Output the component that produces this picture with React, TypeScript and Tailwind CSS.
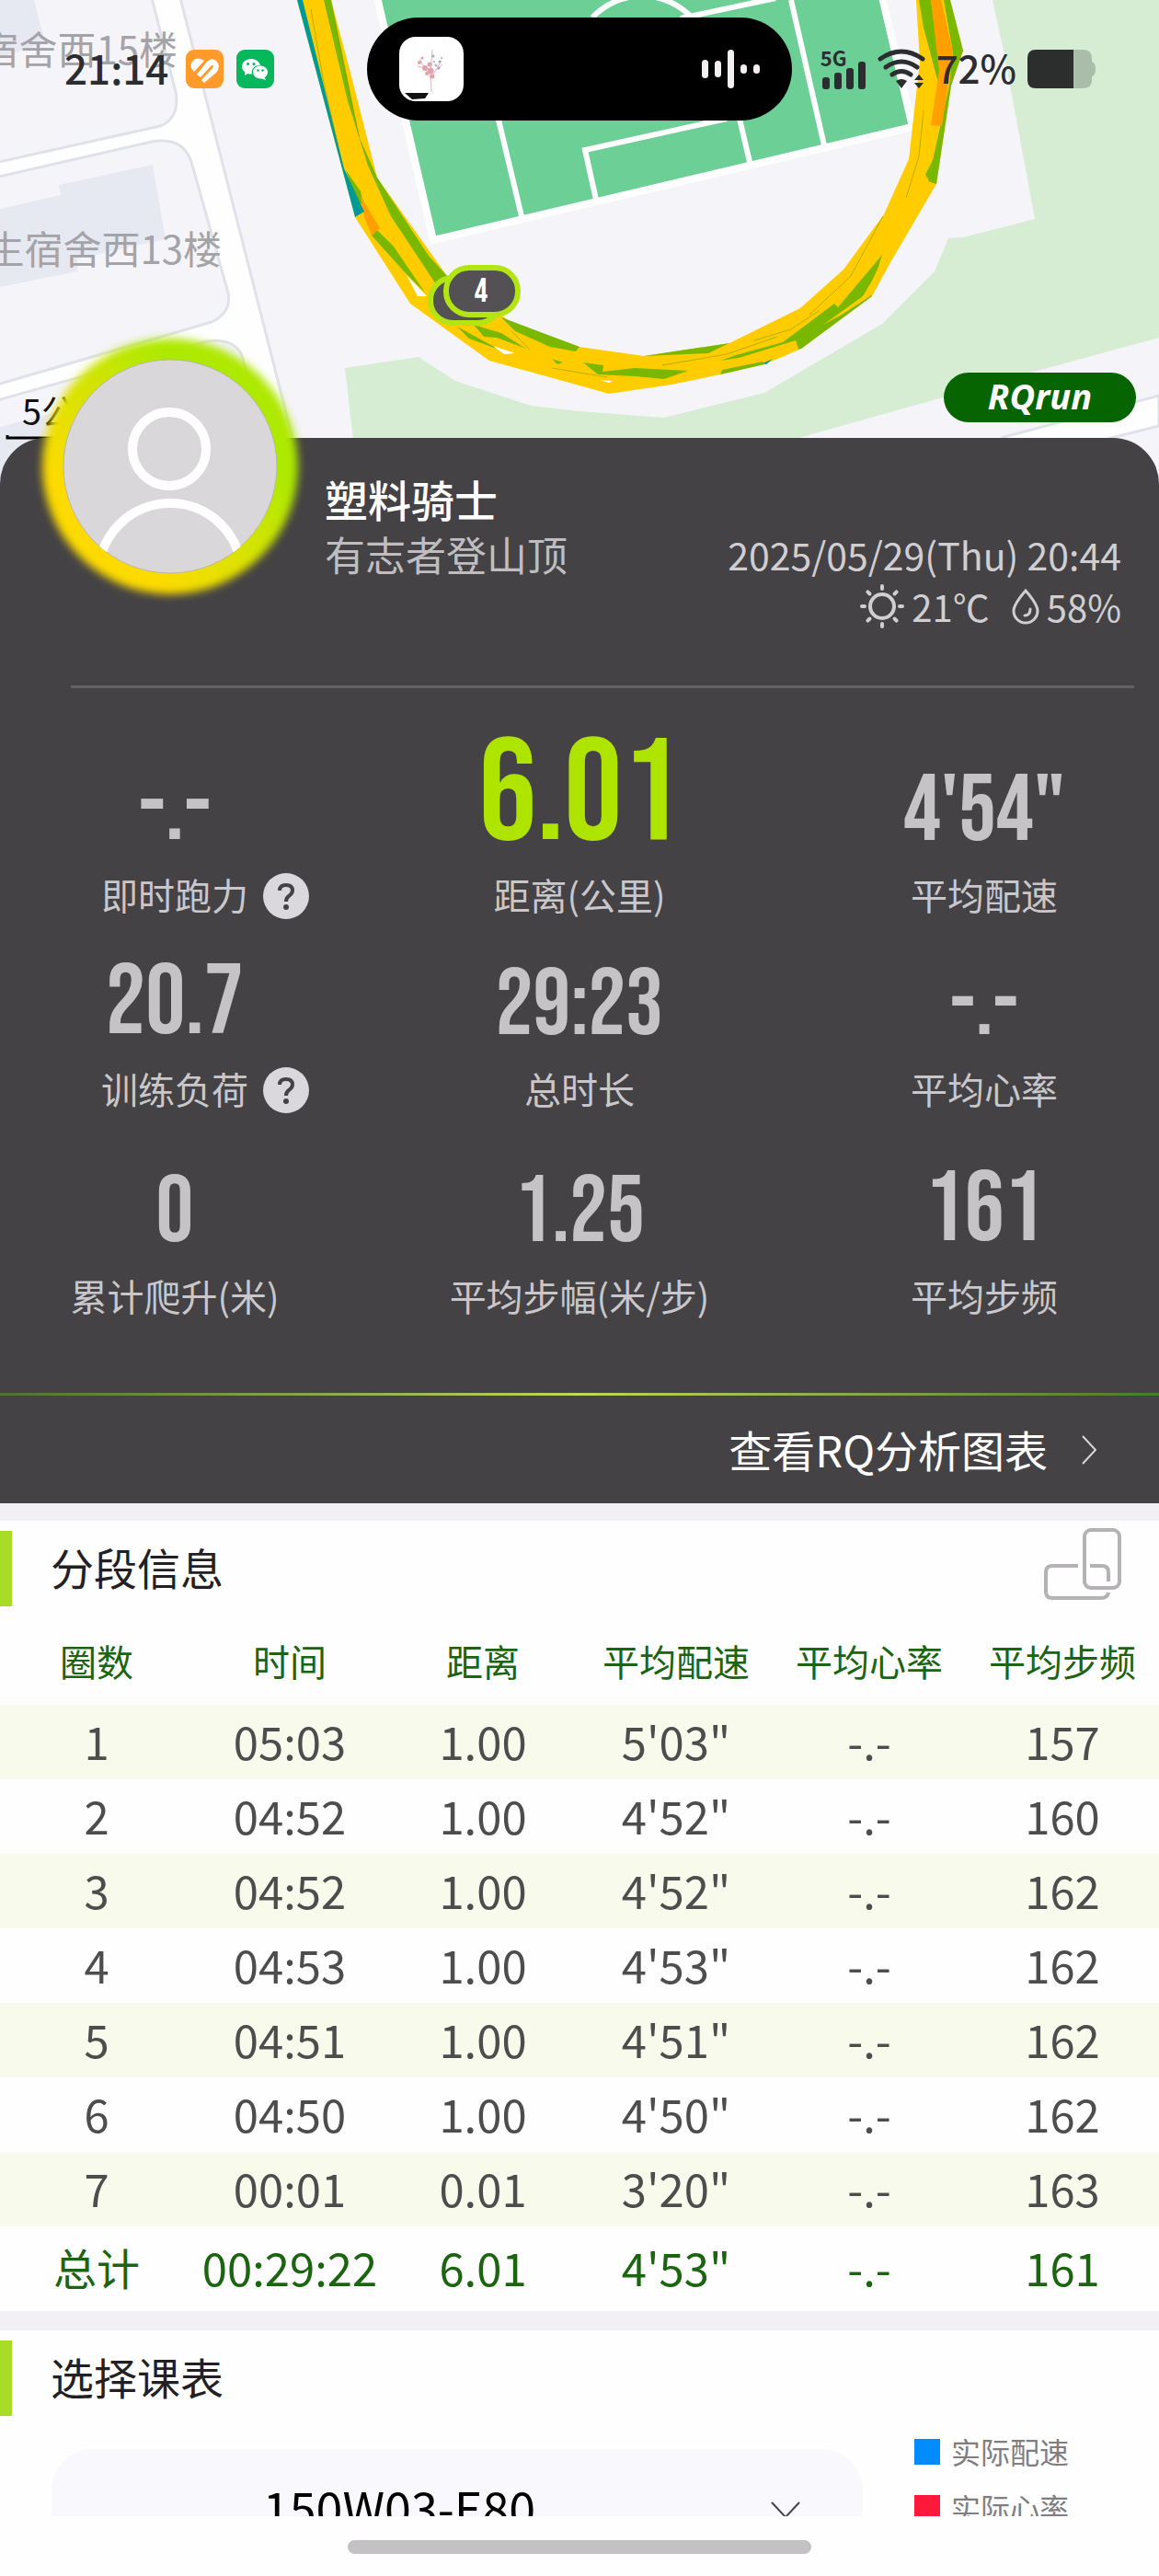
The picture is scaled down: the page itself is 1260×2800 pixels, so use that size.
import type { ReactNode } from "react";

interface Stat {
  label: string;
  value: string;
  size?: "hero" | "large";
  help?: boolean;
}

const STATS: Stat[] = [
  { label: "即时跑力", value: "-.-", size: "large", help: true },
  { label: "距离(公里)", value: "6.01", size: "hero" },
  { label: "平均配速", value: "4'54\"" },
  { label: "训练负荷", value: "20.7", size: "large", help: true },
  { label: "总时长", value: "29:23" },
  { label: "平均心率", value: "-.-" },
  { label: "累计爬升(米)", value: "0" },
  { label: "平均步幅(米/步)", value: "1.25" },
  { label: "平均步频", value: "161", size: "large" },
];

const VALUE_STYLES = {
  hero: "text-[158px] text-[#aee400]",
  large: "mb-[10px] text-[108px] text-[#c6c3c7]",
  base: "mb-[10px] text-[102px] text-[#c6c3c7]",
};

const LAP_HEAD = ["圈数", "时间", "距离", "平均配速", "平均心率", "平均步频"];

const LAPS = [
  ["1", "05:03", "1.00", "5'03\"", "-.-", "157"],
  ["2", "04:52", "1.00", "4'52\"", "-.-", "160"],
  ["3", "04:52", "1.00", "4'52\"", "-.-", "162"],
  ["4", "04:53", "1.00", "4'53\"", "-.-", "162"],
  ["5", "04:51", "1.00", "4'51\"", "-.-", "162"],
  ["6", "04:50", "1.00", "4'50\"", "-.-", "162"],
  ["7", "00:01", "0.01", "3'20\"", "-.-", "163"],
];

const LAP_TOTAL = ["00:29:22", "6.01", "4'53\"", "-.-", "161"];

function TrackMap() {
  return (
    <svg
      className="block h-[530px] w-full"
      viewBox="0 0 1260 530"
      preserveAspectRatio="xMidYMin slice"
      aria-label="跑步轨迹"
    >
      <rect width="1260" height="530" fill="#f5f4f9" />

      {/* Streets and dormitory blocks */}
      <path d="M-10 -10H194L318 476L332 540H-10Z" fill="#fefefe" stroke="#e0e2ea" strokeWidth="3" />
      <path d="M-10 -10H163L191 100Q196 128 174 137L-10 178Z" fill="#f5f4f9" stroke="#e0e2ea" strokeWidth="3" />
      <path d="M-10 194L165 154Q199 148 208 176L248 318Q252 340 230 350L-10 420Z" fill="#f5f4f9" stroke="#e0e2ea" strokeWidth="3" />
      <path d="M-10 437L225 371Q252 367 262 384L292 480V540H-10Z" fill="#f5f4f9" stroke="#e0e2ea" strokeWidth="3" />
      <path d="M0 0H37L49 47L0 62Z" fill="#e6e9f1" />
      <path d="M0 227L66 212L64 201L166 179L180 260L84 281V295L0 312Z" fill="#e6e9f1" />
      <path d="M0 464L60 448V530H0Z" fill="#e6e9f1" />

      {/* Lawns */}
      <path
        d="M375 400L455 388L495 414L577 441L630 447L722 454L831 427L959 352L1016 295L1031 259L1047 258L1125 238L1092 60L1079 0H1260V367L1128 403L868 476V530H390Z"
        fill="#d6edd4"
      />
      <path d="M1088 476L1260 430V463L1208 476L1160 490Z" fill="#fefefe" stroke="#e0e2ea" strokeWidth="3" />

      {/* Football pitch */}
      <path d="M408 -12L471 261L992 138L957 -12Z" fill="#6bcf96" stroke="#fefefe" strokeWidth="8" />
      <g fill="none" stroke="#fefefe" strokeWidth="6">
        <path d="M530 80L567 235M648 217L636 163L790 129M803 125L815 176M860 0L896 158M740 20L843 -2" />
        <path d="M644 19A74 74 0 0 1 752 19" />
      </g>

      {/* Run track, coloured by pace */}
      <path
        d="M323 0L386 236L446 330L532 392L630 419L662 428L730 418L783 407L831 396L871 379L948 322L967 287L1018 200L1034 93L1047 55L1033 0H996L1000 67L988 173L961 233L917 293L870 335L793 373L700 387L630 377L554 349L486 300L410 193L382 83L360 0Z"
        fill="#ffcc00"
      />
      <g fill="#7ab800">
        <path d="M352 0H360L391 150L410 193L466 278L486 300L476 312L425 235L400 180L378 110Z" />
        <path d="M376 185L392 208L396 225L386 215Z" />
        <path d="M410 250L428 268L462 318L440 296L404 256Z" />
        <path d="M545 345L630 377L626 382L598 377L560 360Z" />
        <path d="M515 353L545 362L572 379L540 367L526 366Z" />
        <path d="M497 355L532 374L548 382L510 368Z" />
        <path d="M600 390L612 394L606 396Z" />
        <path d="M700 387L793 373L770 384Z" />
        <path d="M634 394L656 397L655 404L690 400L748 403L722 412L690 409L650 407Z" />
        <path d="M783 392L800 386L851 372L907 330L911 334L959 277L955 290L943 317L948 322L871 379Z" />
        <path d="M785 402L829 393L831 396L783 407Z" />
        <path d="M1026 0H1033L1047 55L1034 93L1018 200L1009 197L1032 93L1036 57Z" />
        <path d="M999 0H1012L1024 77L1020 90L1004 30Z" />
        <path d="M1017 168L1006 190L1010 196Z" />
      </g>
      <path d="M851 388L868 379L865 370L800 390L783 400Z" fill="#ffcc00" />
      <path d="M895 353L938 322L961 283L967 287L946 322L915 342Z" fill="#ffcc00" />
      <g fill="#ffa000">
        <path d="M1012 0H1023L1036 57L1024 137L1012 136L1021 77Z" />
        <path d="M392 213L413 248L404 256L396 236Z" />
      </g>
      <path d="M323 0H329L374 183L396 230L386 236Z" fill="#009a96" />
      <path d="M829 395L840 390L833 396Z" fill="#009a96" />
      <path d="M442 299L464 322L454 322ZM536 376L560 384L548 385ZM652 413L666 414L662 416Z" fill="#fefefe" />
      <g fill="none" stroke="#8a9a10" strokeWidth="1" opacity="0.6">
        <path d="M363 20L390 148M338 10L352 90L368 160M556 360L576 380M1004 120L999 170L985 215M960 235L925 300L880 342M890 338L860 358L820 370M720 397L790 385L845 366M600 400L660 410" />
      </g>

      {/* Kilometre markers */}
      <rect x="468" y="302" width="76" height="49" rx="24" fill="#545154" stroke="#b3e512" strokeWidth="6" />
      <rect x="485" y="291" width="78" height="51" rx="25" fill="#545154" stroke="#b3e512" strokeWidth="6" />
      <text x="523" y="328" textAnchor="middle" fontSize="36" fontFamily="'Bebas Neue', Roboto, sans-serif" fill="#fff">
        4
      </text>

      <g fontFamily="'Noto Sans CJK SC', sans-serif" fontSize="42">
        <text x="193" y="70" textAnchor="end" fill="#a3a3a8">生宿舍西15楼</text>
        <text x="241" y="287" textAnchor="end" fill="#a3a3a8">生宿舍西13楼</text>
        <text x="24" y="462" fontSize="38" fill="#111">5公里</text>
      </g>
      <path d="M8 473V476H80" fill="none" stroke="#000" strokeWidth="3" />
    </svg>
  );
}

function StatusBar() {
  return (
    <header className="absolute inset-x-0 top-0 flex h-[150px] items-center justify-between pr-[69px] pl-[70px] text-[#2c2d30]">
      <div className="flex items-center">
        <span className="w-[132px] pb-1 text-[44px] leading-none font-medium">21:14</span>
        <svg width="41" height="42" viewBox="0 0 41 42" className="mr-[14px]">
          <rect width="41" height="42" rx="9" fill="#ff9a2b" />
          <path d="M7 13Q11 8 16 10L20 12L9 24Q3 18 7 13Z" fill="#fff" />
          <path d="M12 27L23 13Q28 8 33 12Q39 18 33 25L20 36L17 33L29 20Q31 17 28 17L16 30Z" fill="#fff" />
          <path d="M17 31L29 18" stroke="#ff9a2b" strokeWidth="2" />
        </svg>
        <svg width="41" height="42" viewBox="0 0 41 42">
          <rect width="41" height="42" rx="9" fill="#07b75c" />
          <path d="M16 10C10 10 6 14 6 18.500C6 21 7.500 23 9.500 24.500L9 28L12.500 26Q14 26.600 17 26.500C16 20 20 17 26 17C25 13 21 10 16 10Z" fill="#fff" />
          <ellipse cx="26" cy="24.500" rx="8" ry="7" fill="#fff" />
          <path d="M30 29L32 33L26 31Z" fill="#fff" />
          <g fill="#07b75c">
            <circle cx="12.500" cy="15.500" r="1.500" />
            <circle cx="19" cy="15.500" r="1.500" />
            <circle cx="23.500" cy="22.500" r="1.300" />
            <circle cx="28.500" cy="22.500" r="1.300" />
          </g>
        </svg>
      </div>

      {/* Media pill */}
      <div className="absolute top-[19px] left-1/2 flex h-[112px] w-[462px] -translate-x-1/2 items-center justify-between rounded-full bg-black pr-[34px] pl-[35px]">
        <svg width="70" height="70" viewBox="0 0 70 70">
          <rect width="70" height="70" rx="18" fill="#fff" />
          <path d="M6 61H32L28 67L14 68Z" fill="#111" />
          <g fill="none" stroke="#e2b4ba" strokeWidth="1">
            <path d="M35 60L34 44L22 24M34 44L36 14M35 44L46 26M28 34L20 32M40 36L47 30" />
          </g>
          <g fill="#e0a3aa">
            <circle cx="28" cy="34" r="3" />
            <circle cx="34" cy="37" r="3.500" />
            <circle cx="33" cy="30" r="2.500" />
            <circle cx="30" cy="40" r="2" />
            <circle cx="36" cy="43" r="2.500" />
            <circle cx="22" cy="28" r="2" />
            <circle cx="25" cy="23" r="1.500" />
            <circle cx="40" cy="31" r="1.500" />
          </g>
          <g fill="#a9a6bd">
            <circle cx="37" cy="21" r="1.500" />
            <circle cx="44" cy="27" r="1.500" />
            <circle cx="46" cy="23" r="1" />
            <circle cx="43" cy="34" r="1.500" />
            <circle cx="38" cy="27" r="1" />
          </g>
        </svg>
        <svg width="64" height="44" viewBox="0 0 64 44" fill="#f3eef0">
          <rect x="0" y="12" width="7" height="20" rx="3.500" />
          <rect x="14" y="13" width="7" height="18" rx="3.500" />
          <rect x="28" y="1" width="7" height="42" rx="3.500" />
          <rect x="42" y="17" width="7" height="10" rx="3.500" />
          <rect x="56" y="17" width="7" height="10" rx="3.500" />
        </svg>
      </div>

      <div className="flex items-center">
        <div className="flex flex-col">
          <span className="text-[22px] leading-[18px] font-bold">5G</span>
          <svg width="50" height="30" viewBox="0 0 50 30" fill="currentColor" className="-mt-1 mr-3">
            <rect x="2" y="17" width="8" height="13" rx="3" />
            <rect x="15" y="12" width="8" height="18" rx="3" />
            <rect x="28" y="7" width="8" height="23" rx="3" />
            <rect x="41" y="0" width="8" height="30" rx="3" />
          </svg>
        </div>
        <svg width="52" height="44" viewBox="0 0 52 44" className="mr-3">
          <g fill="none" stroke="currentColor" strokeWidth="5" strokeLinecap="round">
            <path d="M3 11Q26 -5 49 11" />
            <path d="M9 20Q26 8 43 20" />
            <path d="M16 28Q26 21 36 28" />
          </g>
          <path d="M20 35Q26 31 32 35L26 43Z" fill="currentColor" />
          <path d="M40 34L45 28L50 34ZM40 37H50L45 43Z" fill="currentColor" />
        </svg>
        <span className="pb-1 text-[42px] leading-none font-medium">72%</span>
        <svg width="74" height="42" viewBox="0 0 74 42" className="ml-3">
          <path d="M49 0H60Q70 0 70 9V13Q74 14 74 21Q74 28 70 29V33Q70 42 60 42H49Z" fill="#aabdaa" />
          <path d="M9 0H50V42H9Q0 42 0 33V9Q0 0 9 0Z" fill="#2c2e2d" />
        </svg>
      </div>
    </header>
  );
}

function Avatar() {
  return (
    <div className="absolute -top-[86px] left-[68px] size-[234px]">
      <div className="absolute -inset-[22px] rounded-full bg-linear-to-bl from-[#aee900] from-30% to-[#fddb00] to-75% blur-[5px]" />
      <svg viewBox="0 0 234 234" className="relative size-full">
        <defs>
          <clipPath id="face">
            <circle cx="117" cy="117" r="116" />
          </clipPath>
        </defs>
        <circle cx="117" cy="117" r="116" fill="#dad7db" stroke="#b9b7a9" strokeWidth="1" />
        <g clipPath="url(#face)" fill="none" stroke="#fff" strokeWidth="10">
          <circle cx="116" cy="98" r="40" />
          <circle cx="117" cy="235" r="78" />
        </g>
      </svg>
    </div>
  );
}

function StatCell({ stat }: { stat: Stat }) {
  return (
    <div className="flex flex-col justify-end">
      <div className={`text-center font-['Bebas_Neue','Roboto',sans-serif] leading-none ${VALUE_STYLES[stat.size ?? "base"]}`}>
        {stat.value}
      </div>
      <div className="grid h-[60px] grid-cols-[1fr_auto_1fr] items-center text-[40px] leading-[52px] text-[#c9c7ca]">
        <span />
        <span className="pb-1 whitespace-nowrap">{stat.label}</span>
        {stat.help && (
          <button
            type="button"
            aria-label={`${stat.label}说明`}
            className="ml-4 flex size-[50px] items-center justify-center rounded-full bg-[#dad8dc] text-[#444245]"
          >
            <svg width="20" height="30" viewBox="0 0 20 30" fill="none" stroke="currentColor" strokeWidth="4">
              <path d="M3 9Q3 3 10 3Q17 3 17 9Q17 12 13 15Q10 17 10 21" />
              <circle cx="10" cy="27" r="3" fill="currentColor" stroke="none" />
            </svg>
          </button>
        )}
      </div>
    </div>
  );
}

function SummaryCard() {
  return (
    <section className="relative -mt-[54px] rounded-t-[50px] bg-[#444245]">
      <Avatar />
      <div className="pt-[38px] pr-[41px] pl-[353px]">
        <h1 className="text-[47px] leading-[56px] font-medium text-white">塑料骑士</h1>
        <div className="flex h-[64px] items-center justify-between whitespace-nowrap">
          <p className="text-[44px] leading-[64px] text-[#bfbdc0]">有志者登山顶</p>
          <time className="text-[41px] leading-[64px] text-[#d0ced1]">2025/05/29(Thu) 20:44</time>
        </div>
        <div className="flex h-[50px] items-center justify-end text-[40px] leading-[50px] text-[#d0ced1]">
          <svg width="48" height="48" viewBox="0 0 48 48" fill="none" stroke="currentColor" strokeWidth="4" strokeLinecap="round">
            <circle cx="24" cy="24" r="13" />
            <path d="M24 2V5M24 43V46M2 24H5M43 24H46M8.400 8.400L10.500 10.500M37.500 37.500L39.600 39.600M8.400 39.600L10.500 37.500M37.500 10.500L39.600 8.400" />
          </svg>
          <span className="ml-2">21℃</span>
          <svg width="30" height="40" viewBox="0 0 30 40" fill="none" stroke="currentColor" strokeWidth="3" className="ml-6">
            <path d="M15 3Q2 18 2 25A13 13 0 0 0 28 25Q28 18 15 3Z" />
            <path d="M20 23Q20 30 14 30" strokeLinecap="round" />
          </svg>
          <span className="ml-2">58%</span>
        </div>
      </div>
      <hr className="mt-[61px] mr-[27px] ml-[77px] h-[3px] border-0 bg-[#636164]" />
      <div className="grid grid-cols-[19fr_25fr_19fr] grid-rows-[256px_211px_225px]">
        {STATS.map((stat) => (
          <StatCell key={stat.label} stat={stat} />
        ))}
      </div>
      <div className="mt-[74px] h-[3px] bg-linear-to-r from-[#4a7432] via-[#bcd95c] to-[#4a7a2c]" />
      <a href="#charts" className="flex h-[117px] items-center justify-end pr-[67px] text-[47px] text-white">
        查看RQ分析图表
        <svg width="17" height="32" viewBox="0 0 17 32" fill="none" stroke="#d8d6d9" strokeWidth="2" className="ml-[37px]">
          <path d="M1 1L15 16L1 31" />
        </svg>
      </a>
    </section>
  );
}

function SectionTitle({ children, action }: { children: ReactNode; action?: ReactNode }) {
  return (
    <div className="flex h-[82px] items-center">
      <span className="h-full w-[13px] bg-[#a9dc26]" />
      <h2 className="ml-[42px] flex-1 pb-1 text-[47px] leading-[72px] text-[#231f24]">{children}</h2>
      {action}
    </div>
  );
}

function LapTable() {
  return (
    <section className="border-t-[19px] border-[#f2f0f4] bg-[#fefefe] pt-[11px]">
      <SectionTitle
        action={
          <button type="button" aria-label="横屏查看" className="mr-10 mb-[10px] text-[#b4b2b5]">
            <svg width="86" height="78" viewBox="0 0 86 78" fill="none" stroke="currentColor" strokeWidth="4">
              <rect x="45" y="2" width="38" height="63" rx="7" />
              <path d="M38 41H10Q3 41 3 48V69Q3 76 10 76H63Q70 76 71 70M51 41H64Q71 41 71 48V58" />
            </svg>
          </button>
        }
      >
        分段信息
      </SectionTitle>
      <table className="w-full table-fixed text-center">
        <thead>
          <tr className="h-[107px] text-[40px] leading-[56px] text-[#1b6410]">
            {LAP_HEAD.map((head) => (
              <th key={head} scope="col" className="p-0 pt-[10px] font-normal whitespace-nowrap">
                {head}
              </th>
            ))}
          </tr>
        </thead>
        <tbody className="text-[49px] leading-[72px] text-[#4e4d4e]">
          {LAPS.map((lap) => (
            <tr key={lap[0]} className="h-[81px] odd:bg-[#f8faec]">
              {lap.map((cell, i) => (
                <td key={i} className="p-0 pb-1">
                  {cell}
                </td>
              ))}
            </tr>
          ))}
        </tbody>
        <tfoot>
          <tr className="h-[92px] text-[49px] leading-[72px] text-[#1b6410]">
            <th scope="row" className="p-0 pb-1 text-[47px] font-normal">
              总计
            </th>
            {LAP_TOTAL.map((cell, i) => (
              <td key={i} className="p-0 pb-1">
                {cell}
              </td>
            ))}
          </tr>
        </tfoot>
      </table>
    </section>
  );
}

function PlanSection() {
  return (
    <section className="border-t-[21px] border-[#f2f0f4] bg-[#fefefe] pt-[11px]">
      <SectionTitle>选择课表</SectionTitle>
      <div className="flex pt-2">
        <div className="relative mt-7 ml-[56px] flex-1">
          <select
            aria-label="选择课表"
            defaultValue="150W03-E80"
            className="h-[134px] w-full appearance-none rounded-[45px] bg-[#f9f8fc] pr-[126px] pb-2 text-center text-[52px] text-black [text-align-last:center]"
          >
            <option>150W03-E80</option>
          </select>
          <svg
            width="32"
            height="18"
            viewBox="0 0 32 18"
            fill="none"
            stroke="#444"
            strokeWidth="2"
            className="pointer-events-none absolute top-[57px] right-[68px]"
          >
            <path d="M1 1L16 17L31 1" />
          </svg>
        </div>
        <ul className="mr-[98px] ml-[56px] text-[32px] leading-[61px] text-[#807e82]">
          <li className="flex items-center">
            <span className="mr-3 size-7 bg-[#008cff]" />
            实际配速
          </li>
          <li className="flex items-center">
            <span className="mr-3 size-7 bg-[#ff1a3c]" />
            实际心率
          </li>
        </ul>
      </div>
    </section>
  );
}

export default function App() {
  return (
    <div className="flex h-screen flex-col bg-[#fefefe] font-['Noto_Sans_CJK_SC',sans-serif]">
      <main className="relative min-h-0 flex-1 overflow-hidden">
        <TrackMap />
        <StatusBar />
        <div className="absolute top-[405px] right-[25px] flex h-[54px] w-[209px] items-center justify-center rounded-full bg-[#066500] pb-1 font-['Noto_Sans',sans-serif] text-[38px] font-bold text-white italic">
          RQrun
        </div>
        <SummaryCard />
        <LapTable />
        <PlanSection />
      </main>
      <div className="flex h-[65px] shrink-0 justify-center pt-[26px]">
        <div className="h-[15px] w-2/5 rounded-full bg-[#c3c1c4]" />
      </div>
    </div>
  );
}
